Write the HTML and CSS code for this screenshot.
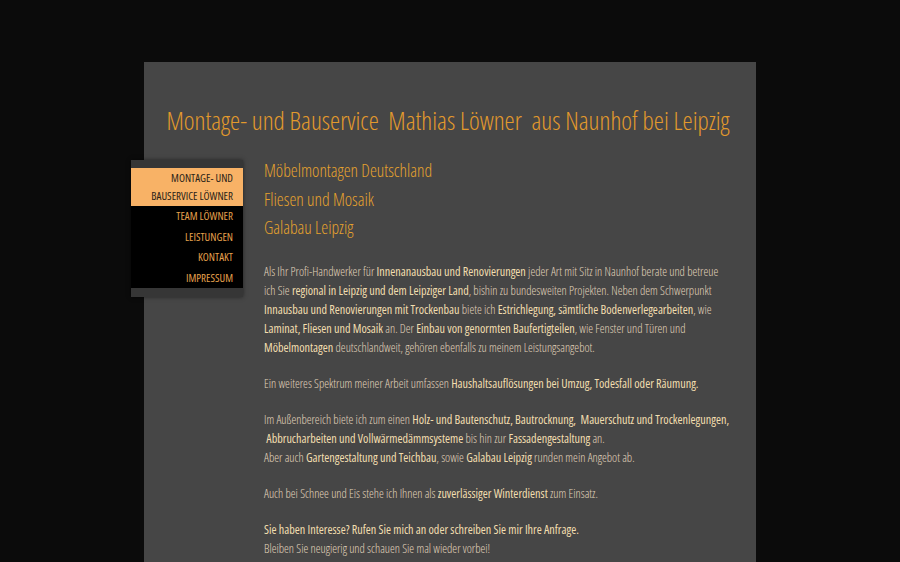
FILE: index.html
```html
<!DOCTYPE html>
<html lang="de">
<head>
<meta charset="utf-8">
<title>Montage- und Bauservice Mathias Löwner</title>
<link rel="stylesheet" href="styles.css">
</head>
<body>
<div class="page">
  <h1 class="title">Montage- und Bauservice&nbsp; Mathias Löwner&nbsp; aus Naunhof bei Leipzig</h1>
  <div class="main">
    <nav class="menu">
      <ul>
        <li class="active"><a href="#">Montage- und<br>Bauservice Löwner</a></li>
        <li><a href="#">Team Löwner</a></li>
        <li><a href="#">Leistungen</a></li>
        <li><a href="#">Kontakt</a></li>
        <li><a href="#">Impressum</a></li>
      </ul>
    </nav>
    <div class="content">
      <h2>Möbelmontagen Deutschland</h2>
      <h2>Fliesen und Mosaik</h2>
      <h2>Galabau Leipzig</h2>
      <div class="text">
        <p>Als Ihr Profi-Handwerker für <b>Innenanausbau und Renovierungen</b> jeder Art mit Sitz in Naunhof berate und betreue ich Sie <b>regional in Leipzig und dem Leipziger Land</b>, bishin zu bundesweiten Projekten. Neben dem Schwerpunkt <b>Innausbau und Renovierungen mit Trockenbau</b> biete ich <b>Estrichlegung, sämtliche Bodenverlegearbeiten</b>, wie <b>Laminat, Fliesen und Mosaik</b> an. Der <b>Einbau von genormten Baufertigteilen</b>, wie Fenster und Türen und <b>Möbelmontagen</b> deutschlandweit, gehören ebenfalls zu meinem Leistungsangebot.</p>
        <p>Ein weiteres Spektrum meiner Arbeit umfassen <b>Haushaltsauflösungen bei Umzug, Todesfall oder Räumung.</b></p>
        <p><span class="nowrap">Im Außenbereich biete ich zum einen <b>Holz- und Bautenschutz, Bautrocknung,&nbsp; Mauerschutz und Trockenlegungen,</b></span><br>&nbsp;<b>Abbrucharbeiten und Vollwärmedämmsysteme</b> bis hin zur <b>Fassadengestaltung</b> an.<br>Aber auch <b>Gartengestaltung und Teichbau</b>, sowie <b>Galabau Leipzig</b> runden mein Angebot ab.</p>
        <p>Auch bei Schnee und Eis stehe ich Ihnen als <b>zuverlässiger Winterdienst</b> zum Einsatz.</p>
        <p><b>Sie haben Interesse? Rufen Sie mich an oder schreiben Sie mir Ihre Anfrage.</b><br>Bleiben Sie neugierig und schauen Sie mal wieder vorbei!</p>
      </div>
    </div>
  </div>
</div>
</body>
</html>
```

FILE: styles.css
```css
html, body {
  margin: 0;
  padding: 0;
  background: #0b0b0b;
  height: 100%;
  overflow: hidden;
}
body {
  font-family: "Open Sans", "Liberation Sans", sans-serif;
  font-stretch: 75%;
}
.page {
  width: 612px;
  margin: 62px auto 0;
  background: #464646;
  min-height: 600px;
  padding-top: 40px;
  box-sizing: border-box;
}
.title {
  margin: 0;
  padding-right: 4px;
  text-align: center;
  font-weight: 300;
  font-size: 25.6px;
  line-height: 38px;
  color: #e39a2c;
  letter-spacing: 0;
}
.main {
  display: flex;
  align-items: flex-start;
  margin-top: 16px;
}
.menu {
  flex: 0 0 112px;
  margin-top: 4px;
  margin-left: -13px;
  width: 112px;
  background: #363636;
  padding: 8px 0 9px;
  box-shadow: 0 0 4px rgba(0,0,0,0.5);
}
.menu ul {
  list-style: none;
  margin: 0;
  padding: 0;
  background: #000;
}
.menu li {
  text-align: right;
  text-transform: uppercase;
  font-size: 11px;
  line-height: 18px;
  padding: 1px 10px 1.5px 0;
}
.menu li a {
  color: #e5a04c;
  text-decoration: none;
}
.menu li.active {
  background: #f8b266;
  padding-top: 1px;
  padding-bottom: 1px;
}
.menu li.active a {
  color: #2a2218;
}
.content {
  margin-left: 21px;
  flex: 1 1 auto;
  min-width: 0;
  padding-right: 28px;
}
.content h2 {
  margin: 0;
  font-weight: 300;
  font-size: 17.5px;
  line-height: 28.5px;
  color: #e5a22e;
}
.text {
  margin-top: 20px;
  font-size: 12.15px;
  line-height: 19px;
  font-weight: 300;
  color: #e0d3bb;
}
.text p {
  margin: 0 0 17px;
}
.text .nowrap {
  white-space: nowrap;
}
.text b {
  font-weight: 400;
  color: #f2deaf;
}
```
